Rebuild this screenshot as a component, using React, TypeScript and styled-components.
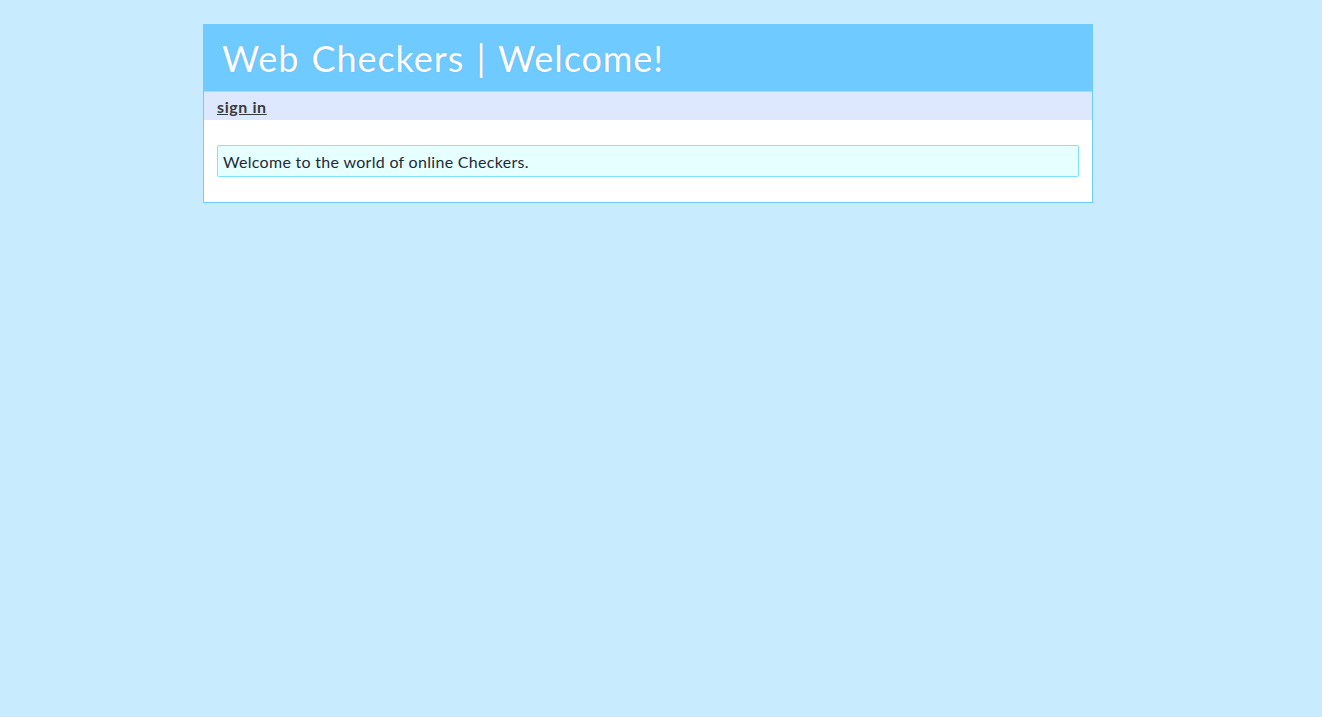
import React from "react";
import styled, { createGlobalStyle } from "styled-components";

const Global = createGlobalStyle`
  html, body { margin: 0; padding: 0; }
  body {
    background: #c9ebfe;
    font-family: "Lato", "DejaVu Sans", sans-serif;
    min-height: 717px;
  }
`;

const Page = styled.div`
  width: 890px;
  margin: 24px 0 0 203px;
  box-sizing: border-box;
  background: #ffffff;
  border: 1px solid #6fcbff;
  border-top: none;
`;

const Header = styled.header`
  background: #6fcbff;
  height: 67px;
  display: flex;
  align-items: center;
  padding: 0 19px;
  margin: 0 -1px;
`;

const Title = styled.h1`
  margin: 0;
  font-family: "Lato", sans-serif;
  font-weight: 400;
  font-size: 36px;
  color: #ffffff;
  letter-spacing: 0.95px;
  word-spacing: 2px;
  text-shadow: 0 0 1px rgba(80, 120, 200, 0.5);
`;

const Nav = styled.nav`
  background: #dde8ff;
  border-top: 1px solid #c4d0dc;
  height: 28px;
  display: flex;
  align-items: center;
  padding: 0 13px;
`;

const NavLink = styled.a`
  font-family: "Lato", sans-serif;
  font-weight: 700;
  font-size: 16px;
  color: #3a3a3a;
  text-decoration: underline;
  letter-spacing: 0.6px;
`;

const Body = styled.main`
  padding: 25px 13px 25px 13px;
`;

const Info = styled.div`
  background: #e6ffff;
  border: 1px solid #7ee3ff;
  border-radius: 2px;
  padding: 0 5px;
  height: 30px;
  display: flex;
  align-items: center;
  font-family: "Lato", sans-serif;
  font-size: 16px;
  color: #1e2a38;
  letter-spacing: 0.3px;
`;

export default function App() {
  return (
    <>
      <Global />
      <Page>
        <Header>
          <Title>Web Checkers | Welcome!</Title>
        </Header>
        <Nav>
          <NavLink href="#">sign in</NavLink>
        </Nav>
        <Body>
          <Info>Welcome to the world of online Checkers.</Info>
        </Body>
      </Page>
    </>
  );
}
